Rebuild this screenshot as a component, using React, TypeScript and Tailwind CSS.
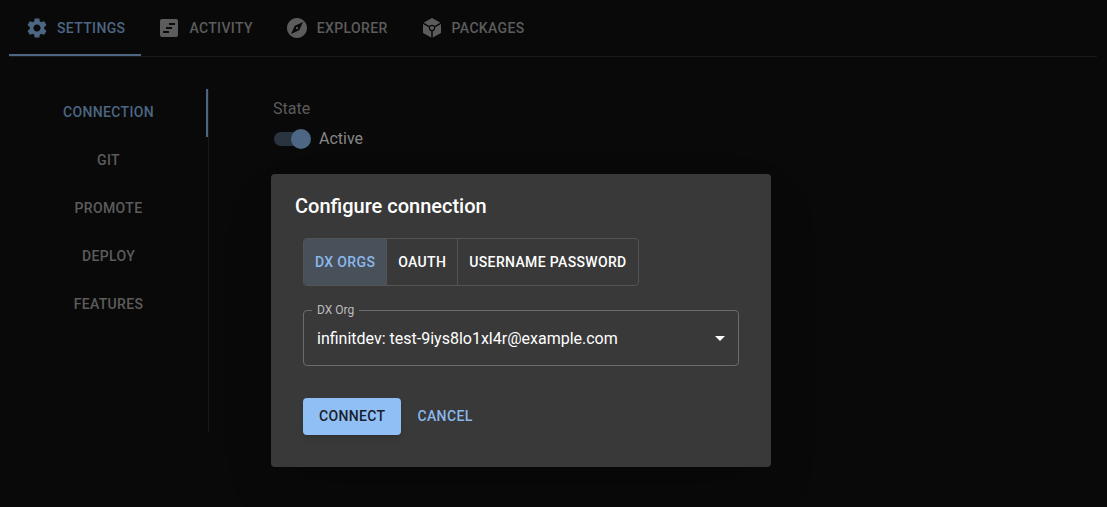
import type { ReactNode } from "react";
import { useState } from "react";
import { MdSettings, MdExplore } from "react-icons/md";

function ActivityIcon() {
  return (
    <svg viewBox="0 0 24 24" className="size-6 fill-current" aria-hidden="true">
      <path
        fillRule="evenodd"
        d="M5 3h14a2 2 0 0 1 2 2v14a2 2 0 0 1-2 2H5a2 2 0 0 1-2-2V5a2 2 0 0 1 2-2Zm7 4v2h6V7h-6Zm-3 4v2h6v-2H9Zm-3 4v2h6v-2H6Z"
      />
    </svg>
  );
}

function PackagesIcon() {
  return (
    <svg viewBox="0 0 24 24" className="size-6 fill-current" aria-hidden="true">
      <mask id="cube-seams">
        <rect width="24" height="24" fill="white" />
        <path d="M1 6 12 12.300 23 6M12 12v11" fill="none" stroke="black" strokeWidth="1.500" />
        <circle cx="12" cy="12" r="3.200" fill="black" />
      </mask>
      <path d="M12 1.900 21 7v10l-9 5.100L3 17V7Z" mask="url(#cube-seams)" />
      <circle cx="12" cy="12" r="2" />
    </svg>
  );
}

const topTabs: { label: string; icon: ReactNode }[] = [
  { label: "Settings", icon: <MdSettings className="size-6" /> },
  { label: "Activity", icon: <ActivityIcon /> },
  { label: "Explorer", icon: <MdExplore className="size-6" /> },
  { label: "Packages", icon: <PackagesIcon /> },
];
const sideTabs = ["Connection", "Git", "Promote", "Deploy", "Features"];
const methods = ["DX Orgs", "OAuth", "Username Password"];

export default function App() {
  const [tab, setTab] = useState("Settings");
  const [section, setSection] = useState("Connection");
  const [method, setMethod] = useState("DX Orgs");

  return (
    <div className="relative min-h-screen bg-[#090909] font-['Roboto',sans-serif] text-white">
      <div className="pr-[10px] pl-[9px]">
        <nav className="flex border-b border-[#191919]" role="tablist" aria-label="Main">
          {topTabs.map(({ label, icon }) => (
            <button
              key={label}
              type="button"
              role="tab"
              aria-selected={tab === label}
              onClick={() => setTab(label)}
              className={`flex h-14 items-center gap-2 border-b-2 px-4 pt-0.5 text-sm font-medium tracking-wide uppercase ${
                tab === label ? "border-[#4c6683] text-[#4c6683]" : "border-transparent text-[#5c5c5c]"
              }`}
            >
              {icon}
              {label}
            </button>
          ))}
        </nav>

        <div className="flex pt-8">
          <nav
            className="flex min-h-[343px] w-[200px] shrink-0 flex-col border-r border-[#191919]"
            role="tablist"
            aria-label="Settings sections"
          >
            {sideTabs.map((label) => (
              <button
                key={label}
                type="button"
                role="tab"
                aria-selected={section === label}
                onClick={() => setSection(label)}
                className={`h-12 border-r-2 pr-4 pb-0.5 pl-[18px] text-sm font-medium tracking-wide uppercase ${
                  section === label ? "border-[#4c6683] text-[#4c6683]" : "border-transparent text-[#5c5c5c]"
                }`}
              >
                {label}
              </button>
            ))}
          </nav>

          <main className="px-16 pt-2">
            <p className="text-base leading-6 text-[#5c5c5c]">State</p>
            <label className="mt-1 flex items-center gap-2 text-base leading-7 text-[#868686]">
              <span className="relative flex h-5 w-[38px] items-center pl-px">
                <input type="checkbox" role="switch" defaultChecked className="peer absolute inset-0 z-10 opacity-0" />
                <span className="h-3.5 w-[34px] rounded-full bg-[#293440]" />
                <span className="absolute right-0 size-5 rounded-full bg-[#4c6683] peer-not-checked:right-4" />
              </span>
              Active
            </label>
          </main>
        </div>
      </div>

      <div
        role="dialog"
        aria-labelledby="dialog-title"
        className="absolute top-[174px] left-[271px] w-[500px] rounded bg-[#393939] px-6 pt-4 pb-8 shadow-2xl"
      >
        <h2 id="dialog-title" className="text-xl leading-8 font-medium">
          Configure connection
        </h2>
        <form className="px-2 pt-4" onSubmit={(e) => e.preventDefault()}>
          <div className="inline-flex h-12 divide-x divide-[#545454] overflow-hidden rounded border border-[#545454]">
            {methods.map((label) => (
              <button
                key={label}
                type="button"
                aria-pressed={method === label}
                onClick={() => setMethod(label)}
                className={`px-[11px] text-sm font-medium tracking-wide uppercase ${
                  method === label ? "bg-[#485059] text-[#8bb8ec]" : "text-white"
                }`}
              >
                {label}
              </button>
            ))}
          </div>

          <div className="relative mt-6">
            <label
              htmlFor="dx-org"
              className="absolute -top-2 left-[9px] bg-[#393939] px-[5px] text-xs leading-4 text-[#bdbdbd]"
            >
              DX Org
            </label>
            <select
              id="dx-org"
              className="h-14 w-full appearance-none rounded border border-[#6b6b6b] bg-transparent pt-0.5 pr-8 pl-[13px] text-base text-white"
            >
              <option>infinitdev: test-9iys8lo1xl4r@example.com</option>
            </select>
            <svg viewBox="0 0 24 24" className="pointer-events-none absolute top-4 right-[7px] size-6 fill-white" aria-hidden="true">
              <path d="m7 10 5 5 5-5z" />
            </svg>
          </div>

          <div className="mt-8 flex">
            <button
              type="submit"
              className="h-[37px] rounded bg-[#90bff6] px-4 pb-px text-sm font-medium tracking-wide text-[#17202a] uppercase shadow-md"
            >
              Connect
            </button>
            <button type="button" className="h-[37px] px-4 pb-px text-sm font-medium tracking-wide text-[#8bb8ec] uppercase">
              Cancel
            </button>
          </div>
        </form>
      </div>
    </div>
  );
}
